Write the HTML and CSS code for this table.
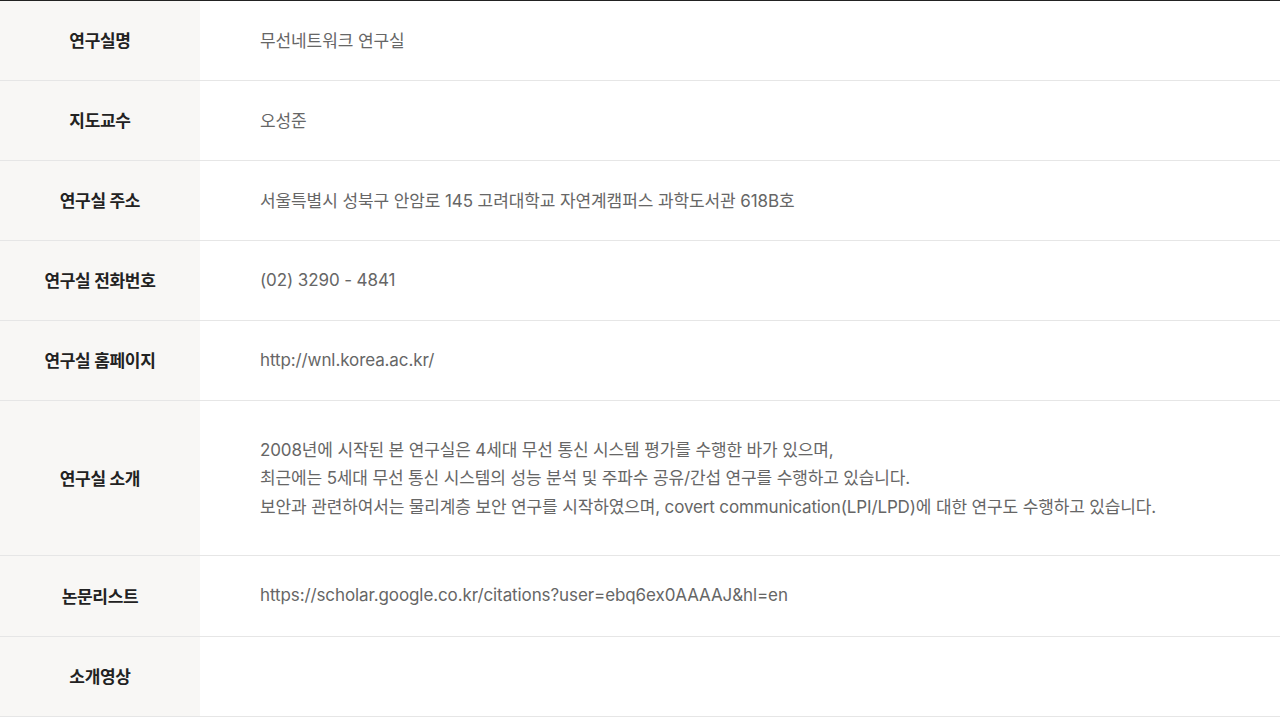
FILE: index.html
```html
<!DOCTYPE html>
<html lang="ko">
<head>
<meta charset="utf-8">
<link rel="stylesheet" href="styles.css">
</head>
<body>
<div class="info">
  <div class="row"><div class="label">연구실명</div><div class="value">무선네트워크 연구실</div></div>
  <div class="row"><div class="label">지도교수</div><div class="value">오성준</div></div>
  <div class="row"><div class="label">연구실 주소</div><div class="value">서울특별시 성북구 안암로 145 고려대학교 자연계캠퍼스 과학도서관 618B호</div></div>
  <div class="row"><div class="label">연구실 전화번호</div><div class="value">(02) 3290 - 4841</div></div>
  <div class="row"><div class="label">연구실 홈페이지</div><div class="value">http://wnl.korea.ac.kr/</div></div>
  <div class="row tall"><div class="label">연구실 소개</div><div class="value multi">2008년에 시작된 본 연구실은 4세대 무선 통신 시스템 평가를 수행한 바가 있으며,<br>최근에는 5세대 무선 통신 시스템의 성능 분석 및 주파수 공유/간섭 연구를 수행하고 있습니다.<br>보안과 관련하여서는 물리계층 보안 연구를 시작하였으며, covert communication(LPI/LPD)에 대한 연구도 수행하고 있습니다.</div></div>
  <div class="row url"><div class="label">논문리스트</div><div class="value">https://scholar.google.co.kr/citations?user=ebq6ex0AAAAJ&amp;hl=en</div></div>
  <div class="row"><div class="label">소개영상</div><div class="value"></div></div>
</div>
</body>
</html>
```
FILE: styles.css
```css
* { box-sizing: border-box; }
html, body { margin: 0; padding: 0; background: #fff; }
body { font-family: Inter, "Noto Sans CJK KR", sans-serif; }
.info { border-top: 1px solid #222; }
.row { display: flex; border-bottom: 1px solid #e6e6e6; min-height: 80px; }
.row.tall { min-height: 155px; }
.row.url { min-height: 81px; }
.label {
  width: 200px; flex: none; background: #f8f7f5;
  display: flex; align-items: center; justify-content: center;
  font-size: 17px; font-weight: 700; color: #222; letter-spacing: -0.3px;
  padding-bottom: 2px;
}
.value {
  flex: 1; display: flex; align-items: center; padding-left: 60px;
  font-size: 17px; color: #666; padding-bottom: 2px; letter-spacing: -0.1px;
}
.value.multi { display: block; align-self: center; line-height: 28.5px; padding-bottom: 0; padding-top: 1px; letter-spacing: -0.14px; }
```
